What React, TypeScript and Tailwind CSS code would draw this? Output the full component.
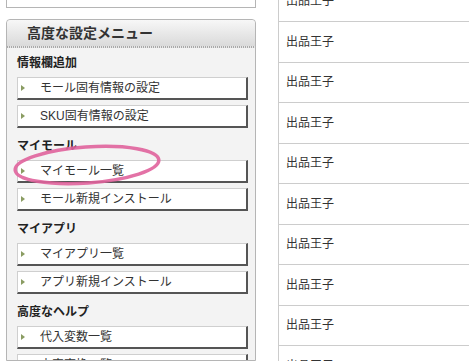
import React from "react"

const sections = [
  { title: "情報欄追加", items: ["モール固有情報の設定", "SKU固有情報の設定"] },
  { title: "マイモール", items: ["マイモール一覧", "モール新規インストール"] },
  { title: "マイアプリ", items: ["マイアプリ一覧", "アプリ新規インストール"] },
  { title: "高度なヘルプ", items: ["代入変数一覧", "文字変換一覧"] },
]

const rows = Array.from({ length: 10 }, () => "出品王子")

function MenuButton({ label }: { label: string }) {
  return (
    <div className="h-[23px] shrink-0 flex items-center bg-white border border-[#cfcfcf] border-r-2 border-b-2 border-r-[#555] border-b-[#555]">
      <span className="ml-[3px] w-0 h-0 border-y-[3px] border-y-transparent border-l-[4px] border-l-[#8a9c62]" />
      <span className="ml-[15px] text-[12px] text-[#333] leading-none">{label}</span>
    </div>
  )
}

export default function App() {
  return (
    <div
      className="relative w-[469px] h-[361px] overflow-hidden bg-white flex"
      style={{ fontFamily: '"Liberation Sans", "Noto Sans CJK JP", sans-serif' }}
    >
      {/* left side menu */}
      <div className="w-[256px] shrink-0 pl-[6px] flex flex-col min-h-0">
        <div className="h-[8px] shrink-0 bg-white border border-t-0 border-[#b5b5b5]" />
        <div className="mt-[11px] flex-1 min-h-0 overflow-hidden bg-[#f3f3f3] border border-[#b5b5b5] rounded-t-[4px] flex flex-col">
          <div className="h-[26px] shrink-0 rounded-t-[3px] bg-gradient-to-b from-[#f7f7f7] to-[#dadada] flex items-center pl-[20px] text-[14px] font-bold text-[#333]">
            高度な設定メニュー
          </div>
          <div className="h-[2px] shrink-0 bg-[repeating-linear-gradient(90deg,#a9a9a9_0px,#a9a9a9_1px,#e6e6e6_1px,#e6e6e6_2px)]" />
          <div className="pl-[10px] pr-[7px] pt-[7px] flex flex-col gap-[10px] shrink-0">
            {sections.map((s) => (
              <div key={s.title} className="flex flex-col shrink-0">
                <div className="h-[16px] leading-[16px] text-[12px] font-bold text-[#222]">{s.title}</div>
                <div className="mt-[6px] flex flex-col gap-[5px]">
                  {s.items.map((it) => (
                    <MenuButton key={it} label={it} />
                  ))}
                </div>
              </div>
            ))}
          </div>
        </div>
      </div>

      {/* right list */}
      <div className="ml-[22px] flex-1 border-l border-[#cccccc] -mt-[18.5px]">
        {rows.map((r, i) => (
          <div key={i} className="h-[40.5px] border-b border-[#cccccc] flex items-center pl-[7px] text-[12px] text-[#333]">
            {r}
          </div>
        ))}
      </div>

      {/* pink annotation */}
      <svg className="absolute left-0 top-0 pointer-events-none" width="469" height="361">
        <ellipse
          cx="87"
          cy="165"
          rx="72"
          ry="18"
          transform="rotate(-4 87 165)"
          fill="none"
          stroke="#e0639c"
          strokeWidth="3.5"
          opacity="0.9"
        />
      </svg>
    </div>
  )
}
